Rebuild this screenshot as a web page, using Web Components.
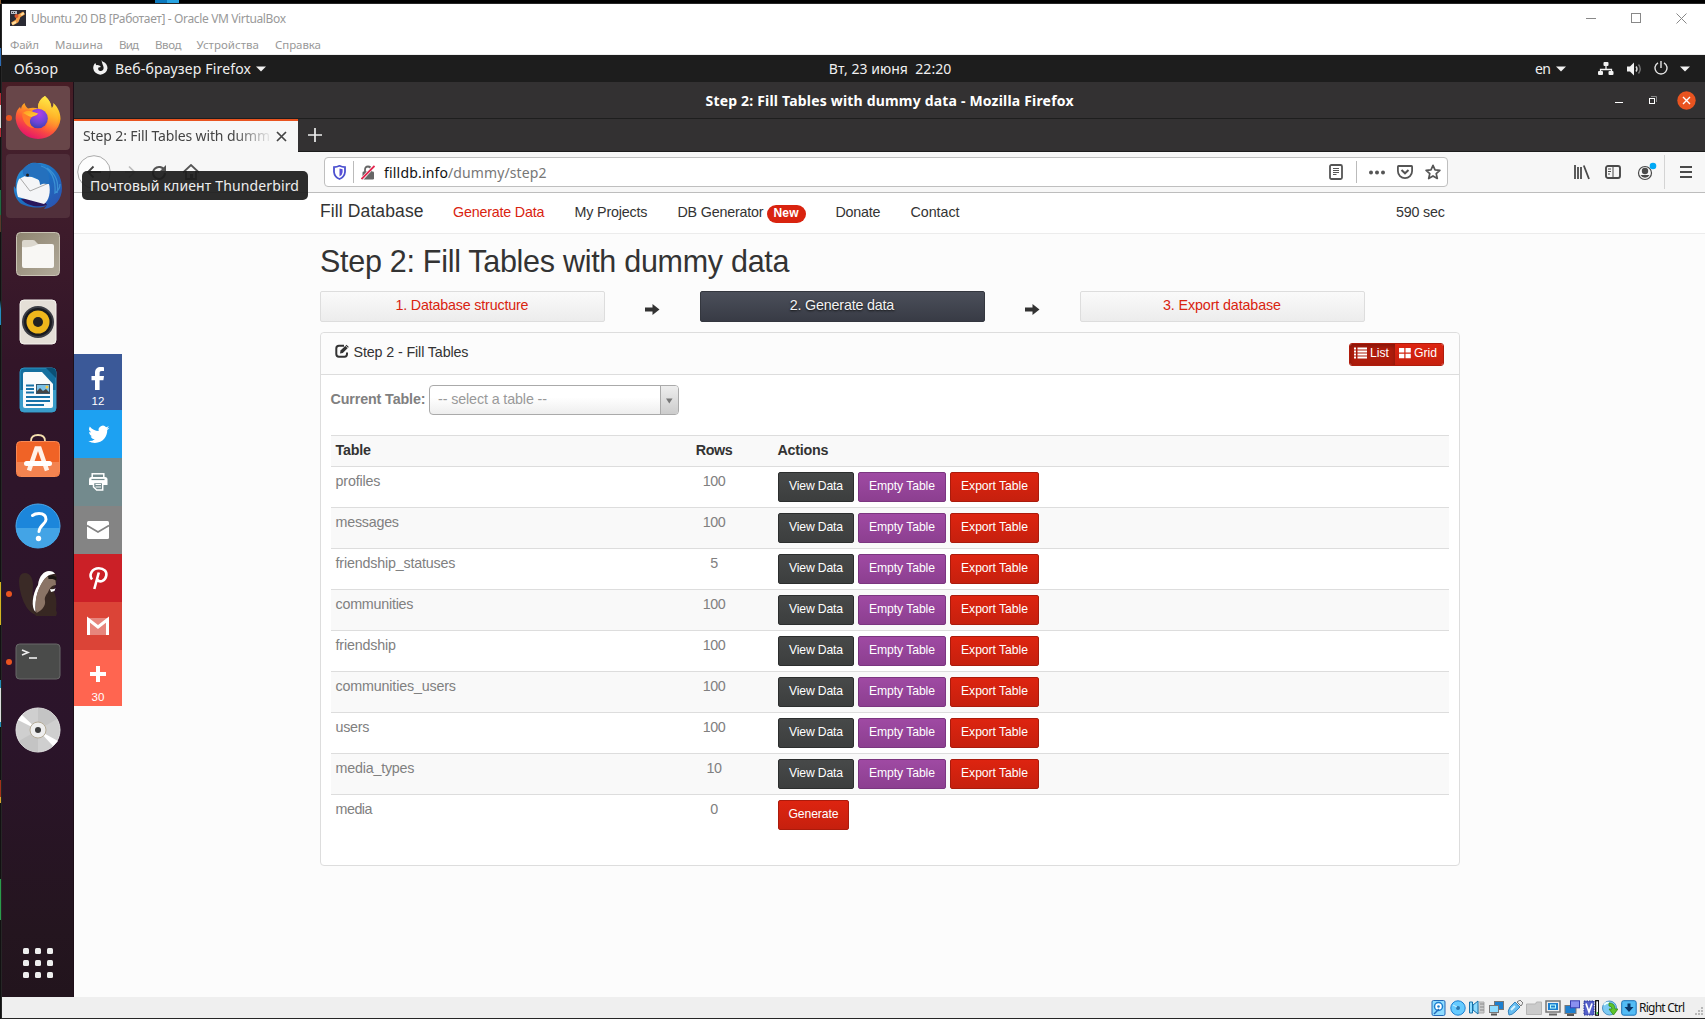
<!DOCTYPE html>
<html lang="ru">
<head>
<meta charset="utf-8">
<title>Ubuntu 20 DB</title>
<style>
html,body{margin:0;height:100%;overflow:hidden;background:#000}
</style>
</head>
<body>
<vm-window></vm-window>
<script>
const def = (name, css, html) => customElements.define(name, class extends HTMLElement {
  connectedCallback() {
    if (this.shadowRoot) return;
    const root = this.attachShadow({mode: 'open'});
    root.innerHTML = `<style>:host,*{box-sizing:border-box}svg{display:block;flex:none}${css}</style>` + (typeof html === 'function' ? html(this) : html);
  }
});

/* Single line of text tracked to an exact width */
customElements.define('fit-text', class extends HTMLElement {
  connectedCallback() {
    if (this.shadowRoot) return;
    const root = this.attachShadow({mode: 'open'});
    root.innerHTML = '<style>:host{display:inline-block;white-space:pre;flex:none}span{display:inline-block}</style><span><slot></slot></span>';
    const w = +this.getAttribute('w');
    if (!w) return;
    const s = root.querySelector('span');
    const n = s.getBoundingClientRect().width;
    s.style.letterSpacing = ((w - n) / Math.max(1, this.textContent.length - 1)).toFixed(3) + 'px';
    this.style.width = w + 'px';
  }
});

def('vm-titlebar', `
:host{display:flex;align-items:center;height:26px;background:#fff;padding:1px 0 0 8px;color:#999;font:12px/16px "Noto Sans",sans-serif}
.t{margin-left:5px;padding-top:2px}.b{margin-left:auto;display:flex;gap:35px;margin-right:18px}.b svg{margin-top:1px}`, `
<svg width="16" height="16"><rect width="16" height="16" fill="#2b2a33"/><path d="M2 14l5-3 2-5 5-3" stroke="#f5a04a" stroke-width="3.4" fill="none"/><path d="M2 14l4-2M11 5l3-2" stroke="#ffe0a0" stroke-width="2" fill="none"/><circle cx="6.5" cy="6" r="2" fill="#d8562c"/><path d="M1 1h6v3H1z" fill="#b9bcc6"/><path d="M2 2h1v1H2zM4 2h1v1H4z" fill="#333"/></svg>
<fit-text class="t" w="255">Ubuntu 20 DB [Работает] - Oracle VM VirtualBox</fit-text>
<div class="b"><svg width="10" height="10"><path d="M0 5.5h10" stroke="#888"/></svg><svg width="10" height="10"><rect x=".5" y=".5" width="9" height="9" fill="none" stroke="#888"/></svg><svg width="11" height="11"><path d="M.5.5l10 10M10.5.5l-10 10" stroke="#888"/></svg></div>`);

def('vm-menubar', `
:host{display:flex;height:25px;background:#fff;border-bottom:1px solid #eee;padding:6px 0 0 8px;color:#999;font:11.5px/17px "Noto Sans",sans-serif}
fit-text{margin-right:16px}`, `
<fit-text w="29">Файл</fit-text><fit-text w="48">Машина</fit-text><fit-text w="20">Вид</fit-text><fit-text w="26.5" style="margin-right:15px">Ввод</fit-text><fit-text w="62.5">Устройства</fit-text><fit-text w="46">Справка</fit-text>`);

const caret = '<svg width="10" height="6"><path d="M0 .5h10L5 5.5z" fill="#f2f2f2"/></svg>';
def('gnome-bar', `
:host{display:grid;grid-template-columns:1fr auto 1fr;align-items:center;height:27px;background:#1d1d1d;color:#f0f0f0;font:14px/20px "Noto Sans",sans-serif}
div{display:flex;align-items:center}.l{padding-left:12px}.r{justify-content:flex-end;padding-right:15px}`, `
<div class="l"><fit-text w="44">Обзор</fit-text>
<svg style="margin:-2px 6px 0 34px" width="17" height="16" viewBox="0 0 17 16"><path d="M10.500 1.500C13.500 2.500 15.500 5 15.500 8.300A7.200 7.200 0 0 1 1.200 8.300C1.200 6 2 4.300 3.300 3L4.300 5.200C6 4.600 8 5.600 9 7L6.500 7.500C5.500 9.500 7 11 8.700 11C10.500 11 11.800 9.600 11.600 7.500C11.400 5.500 10 4 9.500 0z" fill="#f2f2f2"/></svg>
<fit-text w="136" style="margin-right:5px">Веб-браузер Firefox</fit-text>${caret}</div>
<fit-text w="122.500" style="margin-right:-73px">Вт, 23 июня  22:20</fit-text>
<div class="r"><fit-text w="16" style="margin-right:5px">en</fit-text>${caret}
<svg style="margin-left:32px" width="16" height="14"><path d="M8 3v4M2.500 10V7.500h11V10" stroke="#f2f2f2" fill="none" stroke-width="1.3"/><rect x="5.500" y="0" width="5" height="4" rx="1" fill="#f2f2f2"/><rect x="0" y="9" width="5" height="4" rx="1" fill="#f2f2f2"/><rect x="10.500" y="9" width="5" height="4" rx="1" fill="#f2f2f2"/></svg>
<svg style="margin-left:13px" width="15" height="14"><path d="M0 4.500h3L7 .5v13L3 9.500H0z" fill="#f2f2f2"/><path d="M9 4.500q2 2.500 0 5" stroke="#ddd" fill="none" stroke-width="1.400"/><path d="M11.500 2.500q3.500 4.500 0 9" stroke="#777" fill="none" stroke-width="1.400"/></svg>
<svg style="margin:-1px 12px 0 12px" width="14" height="14"><path d="M4 1.800A6 6 0 1 0 10 1.800M7 0v7" stroke="#e5e5e5" fill="none" stroke-width="1.400"/></svg>${caret}</div>`);

def('dock-item', `
:host{display:flex;height:64px;width:64px;margin-left:4px;border-radius:4px;position:relative;align-items:center;justify-content:center}
:host([state=active]){background:#684649}:host([state=hover]){background:#51303b}
i{position:absolute;left:0;top:29px;width:6px;height:6px;border-radius:3px;background:#e95420}`,
el => (el.hasAttribute('running') ? '<i></i>' : '') + '<slot></slot>');

def('gnome-dock', `
:host{display:flex;flex-direction:column;gap:4px;width:72px;padding-top:4px;background:linear-gradient(#471d25 0,#45202c 50px,#3d1b2b 150px,#321528 280px,#2e152a 400px,#2b142a 650px,#24151f 850px,#22141d);border-right:1px solid #1e0f19}
.grid{display:grid;grid-template-columns:6px 6px 6px;gap:6px;margin:auto 0 19px 21px}.grid b{width:6px;height:6px;border-radius:1.500px;background:#eee}`, `
<dock-item state="active" running><svg width="46" height="46" viewBox="0 0 46 46"><defs><linearGradient id="f1" x1=".8" y1="0" x2=".3" y2="1"><stop offset="0" stop-color="#fff44f"/><stop offset=".35" stop-color="#ffb31f"/><stop offset=".65" stop-color="#ff5b36"/><stop offset="1" stop-color="#e3106e"/></linearGradient><radialGradient id="f2" cx=".55" cy=".25" r=".8"><stop offset="0" stop-color="#b33fe8"/><stop offset=".6" stop-color="#6b45d6"/><stop offset="1" stop-color="#3a3fa8"/></radialGradient><linearGradient id="f3" x1="0" y1="0" x2="1" y2="1"><stop offset="0" stop-color="#ff9a1f"/><stop offset="1" stop-color="#ffd23a"/></linearGradient><linearGradient id="f4" x1=".6" y1="0" x2=".4" y2="1"><stop offset="0" stop-color="#fff04a"/><stop offset=".5" stop-color="#ffb52a"/><stop offset="1" stop-color="#ff6a3a" stop-opacity="0"/></linearGradient></defs>
<path d="M30 1C33 4 36 7 36.500 13C38.500 12 38.500 9.500 38.200 8C43 12 45.500 18 45.500 24A22.500 22 0 0 1 .7 24C.7 19 1.500 15 5 12L6 14C6.500 11 7.500 9.500 9.500 8C10 10 11 12 13 13.500C16 12.500 20 12.500 23 13.500C22.500 8 26 3 30 1z" fill="url(#f1)"/>
<path d="M30 1C24 5 23 9 23 13C29 15 33 19 33 25C33 31 28 36 22 36C29 41 43 38 43 24C43 19 40 15 36.500 13C36 7 33 4 30 1z" fill="url(#f4)"/>
<circle cx="23" cy="23.500" r="9.800" fill="url(#f2)"/>
<path d="M7 18C8 14 14 13 18 17L23 18.500C22 21 18 21 17 22C14 24 14 30 19 33C13 33 7 27 7 18z" fill="#ff7b2b"/><path d="M8 18C12 14.500 16 16 18 17L23 18.500C21 21 18 20.500 16.500 22C13 21.500 11 19 8 18z" fill="url(#f3)"/></svg></dock-item>
<dock-item state="hover"><svg width="50" height="50" viewBox="0 0 50 50"><defs><linearGradient id="t1" x1="0" y1="0" x2="1" y2="1"><stop offset="0" stop-color="#2c9be0"/><stop offset=".5" stop-color="#1c6fc2"/><stop offset="1" stop-color="#2e4fae"/></linearGradient></defs>
<path d="M12 7C15 2 20 1 24 2C36 1 49 10 49 27C49 38 42 47 31 48L34 44C28 49 13 46 7 42C3 38 0 31 1 25L3 28C2 20 4 11 12 7z" fill="url(#t1)"/><path d="M8 38C14 45 25 47 34 44L28 36z" fill="#2a175c"/>
<path d="M6 18C3 24 3 30 5 36L31 43C36 40 38 30 36 23L14 14z" fill="#f4f5f7"/><path d="M7 17L17 30L36 22" fill="none" stroke="#aaa" stroke-width="1"/>
<path d="M10 8C15 2 20 2 24 2C34 5 37 12 36 23C33 23 30 22 27 24C27 17 22 15 15 16C11 16 9 13 10 8z" fill="#2470bd"/><path d="M28 5C38 8 43 18 42 32C45 30 47 27 47 23M34 7C43 13 46 22 44 32" stroke="#3b90d3" stroke-width="1.300" fill="none"/><circle cx="14.500" cy="14" r="1.500" fill="#222"/></svg></dock-item>
<dock-item><svg width="44" height="44"><defs><linearGradient id="n" x1="0" y1="0" x2="1" y2="1"><stop offset="0" stop-color="#8e8470"/><stop offset="1" stop-color="#b1aa99"/></linearGradient></defs><rect x=".5" y=".5" width="43" height="43" rx="4" fill="url(#n)" stroke="#c9c3b4"/><path d="M6 17V10q0-2 2-2h9q2 0 3 2l2 2h9v5z" fill="#dbd7cd"/><path d="M6 15q8 1 13-1.500 2-1.500 5-1.500h12q2 0 2 2v20q0 2-2 2H8q-2 0-2-2z" fill="#f8f7f4"/></svg></dock-item>
<dock-item><svg width="38" height="46"><rect x="1" y="1" width="36" height="44" rx="4" fill="#e4dfd7" stroke="#f5f3ee"/><circle cx="19" cy="23" r="16" fill="#3b3d44"/><circle cx="19" cy="23" r="14" fill="#191b20"/><circle cx="19" cy="23" r="11.500" fill="#efb71c"/><circle cx="19" cy="23" r="5" fill="#222"/></svg></dock-item>
<dock-item><svg width="38" height="46"><rect x="1" y="1" width="36" height="44" rx="4" fill="#146f9f" stroke="#2b95c4"/><path d="M1 23h36v18q0 4-4 4H5q-4 0-4-4z" fill="#3a9dca"/><path d="M4 7q0-2 2-2h17l11 12v22q0 2-2 2H6q-2 0-2-2z" fill="#f9fbfc"/><path d="M27 1h6q4 0 4 4v6z" fill="#0a4f75"/><path d="M7 18.500h8M7 22h8M7 25.500h8M7 30h24M7 34h24M7 38h18" stroke="#1672a8" stroke-width="1.800"/><rect x="17.500" y="17.500" width="13" height="9" fill="#79c0e6" stroke="#35566c"/><path d="M18 26v-2l3-3 3 3 3-2 3 3v1z" fill="#444"/><circle cx="28" cy="20" r="1.500" fill="#f9c83c"/></svg></dock-item>
<dock-item><svg style="margin-top:-5px" width="46" height="44" viewBox="-1 0 46 44"><path d="M15 9V7q0-6 7-6t7 6v2" stroke="#f4dfae" stroke-width="1.800" fill="none"/><rect x=".5" y="7.500" width="43" height="35" rx="4" fill="#f06326" stroke="#f88853"/><path d="M1 28h42v10q0 4-4 4H5q-4 0-4-4z" fill="#f38350"/><path d="M13 36.500l7.500-22h3l7.500 22" stroke="#fff1e8" stroke-width="4.500" fill="none"/><rect x="8" y="27" width="28" height="5" rx="2.500" fill="#fff"/></svg></dock-item>
<dock-item><svg width="46" height="46"><circle cx="23" cy="23" r="22" fill="#1c86db" stroke="#4ba8ea"/><path d="M1 25a22 20 0 0 0 44 0z" fill="#43a4e6"/><path d="M17.500 12.500Q20 10.500 24 10.500Q31 10.500 31 16.500C31 21 24.500 22 24 28.500" stroke="#fff" stroke-width="3" fill="none" stroke-linecap="round"/><circle cx="23.500" cy="35.500" r="2.700" fill="#fff"/></svg></dock-item>
<dock-item running><svg width="40" height="48"><path d="M7 3C12 3 15 8 15 15C14 27 15 38 21 45C10 46 2 28 1 12C1 6 3 3 7 3z" fill="#3a2a26"/><path d="M20 14C22 5 26 1 31 1C36 1 39 4 38.500 9C38.500 14 36 18 35 20C38 25 39 31 38 40L39 43L38 46H18C14 40 13 26 20 14z" fill="#372722"/><path d="M20 15C21 6 26 1 31 1C34 1 36 2 37 4C32 4 29 6 26 10C20 19 17 27 17.500 42C13 38 14 24 20 15z" fill="#fff"/><path d="M25 11C28 6 33 4 37 7L38 15C34 15.500 33 17 31 20C29 25 26 26 27 31C28 36 23 41 18.500 43C16 31 19 20 25 11z" fill="#8a7365"/><path d="M32 19q4 1 5.500-1l-1 3-3.500 1z" fill="#fff"/><path d="M30 6l4-1 4.500 2v3.500l-4-1.500-4 0z" fill="#1a1412"/></svg></dock-item>
<dock-item running><svg width="46" height="38"><rect x="1" y="1" width="44" height="35" rx="3.500" fill="#4a4b4a" stroke="#696969"/><path d="M7 7l6 2.500L7 12" stroke="#eee" stroke-width="1.600" fill="none"/><path d="M14 15h8" stroke="#eee" stroke-width="1.600"/></svg></dock-item>
<dock-item><svg width="46" height="46"><circle cx="23" cy="23" r="22" fill="#cfcfcf" stroke="#e3e3e3"/><path d="M23 23L23 1A22 22 0 0 1 42 12zM23 23L23 45A22 22 0 0 1 4 34z" fill="#c4c4c4"/><path d="M23 23L3 13 7 8zM23 23l20 11-5 5z" fill="#fff"/><circle cx="23" cy="23" r="8" fill="#eee" stroke="#b5ac98" stroke-width="1"/><circle cx="23" cy="23" r="3" fill="#3c3c3c"/></svg></dock-item>
<div class="grid">${'<b></b>'.repeat(9)}</div>`);

def('ff-titlebar', `
:host{display:grid;grid-template-columns:1fr auto 1fr;align-items:center;height:37px;background:#333132;border-bottom:1px solid #1e1e1e;color:#fff;font:bold 14px/20px "Noto Sans",sans-serif}
fit-text{padding-top:1px}div{display:flex;align-items:center;justify-content:flex-end;padding-right:9px}`, `
<span></span><fit-text w="368">Step 2: Fill Tables with dummy data - Mozilla Firefox</fit-text>
<div><svg width="8" height="8"><path d="M0 6.500h8" stroke="#fff"/></svg><svg style="margin:0 20px 0 26px" width="8" height="8"><path d="M2 .5h5.500V6" stroke="#888" fill="none"/><rect x=".5" y="2.500" width="5" height="5" fill="none" stroke="#fff"/></svg><svg width="19" height="19"><circle cx="9.500" cy="9.500" r="9.200" fill="#e95420"/><path d="M6 6l7 7M13 6l-7 7" stroke="#fff" stroke-width="1.400"/></svg></div>`);

def('ff-tabs', `
:host{display:flex;height:33px;background:#333132}
.tab{display:flex;align-items:center;width:224px;height:33px;border-top:2px solid #e95420;background:#f7f7f7;padding:0 11px 1px 9px;color:#444;font:14px/20px "Noto Sans",sans-serif}
.clip{width:187px;-webkit-mask:linear-gradient(90deg,#000 150px,transparent 190px);mask:linear-gradient(90deg,#000 150px,transparent 190px)}
.rest{flex:1;border-bottom:1px solid #1c1c1c;padding:9px 0 0 10px}`, `
<div class="tab"><div class="clip"><fit-text w="187">Step 2: Fill Tables with dumm</fit-text></div><svg style="margin-left:6px" width="11" height="11"><path d="M1 1l9 9M10 1l-9 9" stroke="#444" stroke-width="1.700"/></svg></div>
<div class="rest"><svg width="14" height="14"><path d="M7 0v14M0 7h14" stroke="#eee" stroke-width="1.700"/></svg></div>`);

def('ff-urlbar', `
:host{display:flex;align-items:center;width:1124px;height:30px;border:1px solid #bfbfbf;border-radius:4px;background:#fff;padding:0 6px 0 8px;font:14px/20px "Noto Sans",sans-serif;color:#777}
i{width:1px;height:22px;background:#bbb}b{font-weight:400;color:#111}.g{flex:1}fit-text{padding-top:1px}`, `
<svg width="13" height="15"><path d="M1 2.200Q4 2 6.500.8 9 2 12 2.200V7Q11.500 12 6.500 14 1.500 12 1 7z" fill="#fff" stroke="#4b50cf" stroke-width="1.800"/><path d="M6.500 3.500v8Q9.500 10 9.600 7V4.300z" fill="#5a4fd8"/></svg>
<i style="margin:0 7px 0 7px"></i>
<svg width="14" height="15"><path d="M4 7V5q0-3.500 3-3.500T10 5v2" fill="none" stroke="#666" stroke-width="1.800"/><rect x="1.500" y="6.500" width="11.500" height="8" rx="1.200" fill="#666"/><path d="M.5 14.500L13.500.5" stroke="#fff" stroke-width="3.200"/><path d="M.5 14L13.500 1" stroke="#e22850" stroke-width="1.800"/></svg>
<fit-text w="64" style="margin-left:9px"><b>filldb.info</b></fit-text><fit-text w="98.500">/dummy/step2</fit-text><span class="g"></span>
<svg width="14" height="16"><rect x="1" y="1" width="12" height="14" rx="1.500" fill="none" stroke="#555" stroke-width="1.800"/><path d="M4 4.500h6M4 6.500h6M4 8.500h6M4 10.500h3.500" stroke="#555"/></svg>
<i style="margin:0 12px 0 13px"></i>
<svg width="16" height="5"><circle cx="2" cy="2.500" r="2" fill="#555"/><circle cx="8" cy="2.500" r="2" fill="#555"/><circle cx="14" cy="2.500" r="2" fill="#555"/></svg>
<svg style="margin:0 12px" width="16" height="14"><path d="M1.500 1h13q.6 0 .6.700V6A7 7 0 0 1 .9 6V1.700Q.9 1 1.500 1z" fill="none" stroke="#555" stroke-width="1.800"/><path d="M4.500 5L8 8.300 11.500 5" fill="none" stroke="#555" stroke-width="2"/></svg>
<svg width="16" height="16"><path d="M8 1.300l2 4.600 4.900.4-3.700 3.300 1.100 4.900L8 11.900l-4.300 2.600 1.100-4.900L1.100 6.300 6 5.900z" fill="none" stroke="#555" stroke-width="1.700" stroke-linejoin="round"/></svg>`);

def('ff-toolbar', `
:host{display:flex;align-items:center;height:41px;padding-left:3px;background:#f7f7f7;border-bottom:1px solid #bdbdbd}
i{width:1px;height:34px;background:#d4d4d4}.g{flex:1}`, `
<svg width="34" height="34"><circle cx="17" cy="17" r="16.300" fill="#fdfdfd" stroke="#aaa"/><path d="M24 17H11M16.500 11.500L11 17l5.500 5.500" stroke="#444" stroke-width="1.800" fill="none"/></svg>
<svg style="margin-left:13px" width="14" height="14"><path d="M1 7h9M5 1.500L10.500 7 5 12.500" stroke="#bbb" stroke-width="1.700" fill="none"/></svg>
<svg style="margin-left:13px" width="16" height="16"><path d="M13.500 6.500A6 6 0 1 0 14 9" stroke="#555" stroke-width="2" fill="none"/><path d="M15 1v6H9z" fill="#555"/></svg>
<svg style="margin-left:16px" width="16" height="16"><path d="M0 8.500L8 1l8 7.500M3 7v8h10V7" stroke="#555" stroke-width="1.800" fill="none"/><path d="M7 10h3v5H7z" fill="#555"/></svg>
<ff-urlbar style="margin-left:125px"></ff-urlbar><span class="g"></span>
<svg width="16" height="16"><path d="M1 1v14M4 3v12M7 3v12M9.800 1.500L15 15" stroke="#4a4a4a" stroke-width="1.800"/></svg>
<svg style="margin:0 16px 0 15px" width="16" height="14"><rect x="1" y="1" width="14" height="12" rx="2" fill="none" stroke="#4a4a4a" stroke-width="1.900"/><path d="M8 1v12M3 4h3M3 6.500h3M3 9h2" stroke="#4a4a4a"/></svg>
<svg width="20" height="20"><circle cx="8" cy="11" r="6.500" fill="none" stroke="#4a4a4a" stroke-width="1.200"/><circle cx="8" cy="9" r="3.200" fill="#4a4a4a"/><path d="M3.500 13h9Q11 15.800 8 15.800T3.500 13z" fill="#4a4a4a"/><circle cx="16" cy="4" r="3.300" fill="#00a8f5"/></svg>
<i style="margin:0 15px 0 7px"></i>
<svg style="margin-right:13px" width="12" height="14"><path d="M0 2h12M0 7h12M0 12h12" stroke="#4a4a4a" stroke-width="1.900"/></svg>`);

def('site-nav', `
:host{display:flex;align-items:baseline;height:41px;background:#fff;border-bottom:1px solid #ececec;padding:8px 260px 0 246px;font:14.300px/20px "Liberation Sans",sans-serif;color:#333}
.brand{font-size:17.500px;margin-right:29.500px}.on{color:#d9230f}fit-text{margin-right:30px}.badge{margin:0 30px 0 -27px;align-self:flex-start;margin-top:4px;width:39px;height:18px;border-radius:9px;background:#d9230f;color:#fff;font:bold 12px/17px "Liberation Sans",sans-serif;text-align:center}
.badge fit-text{margin:0}.sec{margin:0 0 0 auto}`, `
<fit-text class="brand" w="103.500">Fill Database</fit-text><fit-text class="on" w="91.500">Generate Data</fit-text><fit-text w="73">My Projects</fit-text><fit-text w="86">DB Generator</fit-text><span class="badge"><fit-text w="25">New</fit-text></span><fit-text w="45">Donate</fit-text><fit-text w="49">Contact</fit-text><fit-text class="sec" w="49">590 sec</fit-text>`);

def('step-nav', `
:host{display:flex;align-items:center}
.s{width:285px;height:31px;border:1px solid #ddd;border-radius:2px;background:linear-gradient(#fafafa,#ececec);color:#d9230f;display:flex;justify-content:center;font:14.300px/27px "Liberation Sans",sans-serif;padding-right:1px}
.on{background:linear-gradient(#4b4f5a,#383b45);border-color:#34373f;color:#f3f3f3;text-shadow:0 1px 2px #111}
.a{width:95px;display:flex;justify-content:center;padding:5px 0 0 0}`, () => {
const a = '<div class="a"><svg width="15" height="11"><path d="M0 3.500h7.500V0L14.500 5.500 7.500 11V7.500H0z" fill="#333"/></svg></div>';
return `<div class="s"><fit-text w="133">1. Database structure</fit-text></div>${a}<div class="s on"><fit-text w="104.500">2. Generate data</fit-text></div>${a}<div class="s"><fit-text w="118">3. Export database</fit-text></div>`;});

def('act-button', `
:host{display:inline-flex;justify-content:center;height:30px;border-radius:2px;border:1px solid;color:#fff;font:12.200px/26px "Liberation Sans",sans-serif}
:host([kind=dark]){width:76px;background:linear-gradient(#474949,#3c3e3e);border-color:#2c2e2e}
:host([kind=purple]){width:88px;background:linear-gradient(#9f4aa3,#8c3f90);border-color:#7b3680}
:host([kind=red]){width:89px;background:linear-gradient(#dd2410,#c6200e);border-color:#ab1b0c}
:host([short]){width:71px}`, '<slot></slot>');

def('table-row', `
:host{display:grid;grid-template-columns:356.500px 44px 1fr;height:41px;border-top:1px solid #ddd;padding:5px 0 0 4.500px;color:#808080;font:14.300px/20px "Liberation Sans",sans-serif}
:host([odd]){background:#f9f9f9}
.n{text-align:center}.n,.d{margin-top:-1px}.b{display:flex;gap:4px;padding-left:42px}`, el => {
const [name, w, rows] = ['name','w','rows'].map(k => el.getAttribute(k));
const acts = rows === '0' ? '<act-button kind="red" short><fit-text w="50">Generate</fit-text></act-button>' :
 '<act-button kind="dark"><fit-text w="54">View Data</fit-text></act-button><act-button kind="purple"><fit-text w="66">Empty Table</fit-text></act-button><act-button kind="red"><fit-text w="67">Export Table</fit-text></act-button>';
return `<div class="d"><fit-text w="${w}">${name}</fit-text></div><div class="n"><fit-text w="${rows.length*7.7}">${rows}</fit-text></div><div class="b">${acts}</div>`;});

def('table-panel', `
:host{display:flex;flex-direction:column;width:1140px;height:534px;border:1px solid #ddd;border-radius:4px;background:#fff;font:14.300px/20px "Liberation Sans",sans-serif;color:#333}
.h{display:flex;height:42px;background:#fcfcfc;border-bottom:1px solid #ddd;border-radius:4px 4px 0 0;padding:10px 15px 0 14px}
.h>fit-text{margin-top:-1px}
.tg{margin-left:auto;display:flex;width:95px;height:23px;border:1px solid #b01c0c;border-radius:3px;overflow:hidden;color:#fff;font-size:12.200px;line-height:19px}
.tg span{display:flex;gap:3px;padding-left:4px;background:linear-gradient(#dd2410,#c6200e)}.tg .on{width:45px;background:#ae1c0c;box-shadow:inset 0 2px 4px rgba(0,0,0,.25)}.tg .off{flex:1}.tg svg{margin-top:3px}
.f{display:flex;height:60px;padding:10px 0 0 9.500px;color:#808080;font-weight:bold}
.f>fit-text{margin-top:4px}.sel{display:flex;margin-left:3.500px;width:250px;height:30px;border:1px solid #aaa;border-radius:4px;background:linear-gradient(#fff 40%,#eee);font-weight:400;color:#999;padding:3px 0 0 8px}
.ar{margin:-3px 0 0 auto;width:18px;border-left:1px solid #aaa;background:linear-gradient(#eee,#ccc);border-radius:0 3px 3px 0;padding:12px 0 0 5px}
.th{display:grid;grid-template-columns:356.500px 44px 1fr;height:31px;border-top:1px solid #ddd;background:#f9f9f9;padding:4px 0 0 4.500px;font-weight:bold}
.tb{margin:0 10px}.th div+div{text-align:center}.th div:last-child{text-align:left;padding-left:41.500px}`, () => {
const data = [['profiles',45,100],['messages',63.5,100],['friendship_statuses',120,5],['communities',78,100],['friendship',60.5,100],['communities_users',120.5,100],['users',34,100],['media_types',79,10],['media',37,0]];
return `
<div class="h"><svg style="margin:1px 3.500px 0 0" width="15" height="14"><path d="M9 1.800H4Q1.300 1.800 1.300 4.500v5.500Q1.300 12.700 4 12.700h5.500Q12 12.700 12 10V8.500" stroke="#333" stroke-width="2" fill="none"/><path d="M5 9.500l.5-3L11.500.8l2.300 2.200L7.800 9z" fill="#333"/><path d="M10.300 1.500l3 3" stroke="#fff" stroke-width=".8"/></svg><fit-text w="115">Step 2 - Fill Tables</fit-text>
<div class="tg"><span class="on"><svg width="13" height="12"><path d="M0 1.500h2M0 4.500h2M0 7.500h2M0 10.500h2M3.500 1.500H13M3.500 4.500H13M3.500 7.500H13M3.500 10.500H13" stroke="#fff" stroke-width="1.900"/></svg><fit-text w="19">List</fit-text></span><span class="off"><svg width="12" height="12"><path d="M0 1h5.300v4.500H0zM6.500 1h5.300v4.500H6.500zM0 6.700h5.300v4.500H0zM6.500 6.700h5.300v4.500H6.500z" fill="#fff"/></svg><fit-text w="23">Grid</fit-text></span></div></div>
<div class="f"><fit-text w="95">Current Table:</fit-text><div class="sel"><fit-text w="109">-- select a table --</fit-text><div class="ar"><svg width="7" height="6"><path d="M0 .5h6.500L3.300 5.500z" fill="#777"/></svg></div></div></div>
<div class="tb"><div class="th"><div><fit-text w="35.500">Table</fit-text></div><div><fit-text w="37" style="margin:0 -4px">Rows</fit-text></div><div><fit-text w="51">Actions</fit-text></div></div>
${data.map((d,i)=>`<table-row ${i%2?'odd':''} name="${d[0]}" w="${d[1]}" rows="${d[2]}"></table-row>`).join('')}</div>`;});

def('share-bar', `
:host{display:block;width:48px;color:#fff;font:11.500px/14px "Liberation Sans",sans-serif}
div{height:48px;display:flex;flex-direction:column;align-items:center;justify-content:center}.t{height:56px;justify-content:flex-start;padding-top:8px}`, `
<div class="t" style="background:#3b5998"><svg width="32" height="32" viewBox="0 0 32 32"><path d="M22 5.200V9h-2.300c-1.800 0-2.100.9-2.100 2.100V14H22l-.6 4.300h-3.800V28H13v-9.700H9.500V14H13v-3.300C13 7 15.300 5 18.700 5c1.500 0 2.900.1 3.300.2z" fill="#fff"/></svg><span>12</span></div>
<div style="background:#1da1f2"><svg width="32" height="32" viewBox="0 0 32 32"><path transform="translate(2.800 2.200) scale(.88)" d="M28 8.600a9.900 9.900 0 0 1-2.800.8 4.900 4.900 0 0 0 2.100-2.700 9.900 9.900 0 0 1-3.100 1.200 4.900 4.900 0 0 0-8.400 4.500A14 14 0 0 1 5.700 7.200a4.900 4.900 0 0 0 1.500 6.600 4.900 4.900 0 0 1-2.200-.6v.1a4.900 4.900 0 0 0 3.900 4.800 4.900 4.900 0 0 1-2.200.1 4.900 4.900 0 0 0 4.600 3.400A9.900 9.900 0 0 1 4 23.600a14 14 0 0 0 7.500 2.200c9.100 0 14.300-7.700 14-14.600A10 10 0 0 0 28 8.600z" fill="#fff"/></svg></div>
<div style="background:#738a8d"><svg width="32" height="32" viewBox="0 0 32 32"><rect x="10.200" y="7.800" width="11.600" height="4" fill="#738a8d" stroke="#fff" stroke-width="1.500"/><path d="M9 11h14q2.500 0 2.500 2.500V19H7V13.500Q7 11 9 11z" fill="#fff"/><path d="M9.500 13.500h13" stroke="#738a8d" stroke-width="1.200"/><path d="M11.500 16.500h9.200V24h-6l-3.200-3z" fill="#738a8d" stroke="#fff" stroke-width="1.500"/><path d="M13.500 18.500h5.500M13.500 21h5.500" stroke="#fff" stroke-width="1.200"/></svg></div>
<div style="background:#848484"><svg width="32" height="32" viewBox="0 0 32 32"><rect x="5" y="7" width="22" height="18" rx="1.500" fill="#fff"/><path d="M5 11.500l11 6.500 11-6.500" fill="none" stroke="#848484" stroke-width="1.700"/></svg></div>
<div style="background:#cb2027"><svg width="32" height="32" viewBox="0 0 32 32"><path d="M10 17.500C6.500 13 10 6.200 16.800 6.200C22 6.200 25 9.500 24.300 13.500C23.500 18.500 18 21.500 15.200 17.500M16.800 10.500L12.300 27" stroke="#fff" stroke-width="2.600" fill="none"/></svg></div>
<div style="background:#db4437"><svg width="32" height="32" viewBox="0 0 32 32"><path d="M5 8h22v17H5z" fill="#fff" opacity=".35"/><path d="M6.500 25V9.500L16 17l9.500-7.500V25" stroke="#fff" stroke-width="3" fill="none"/></svg></div>
<div class="t" style="background:#ff6550"><svg width="32" height="32"><path d="M16 8v16M8 16h16" stroke="#fff" stroke-width="4"/></svg><span>30</span></div>`);

def('fill-page', `
:host{display:block;position:relative;flex:1;background:#fcfcfc}
.c{padding-left:246px}.ti{font:30.500px/40px "Liberation Sans",sans-serif;color:#333;height:57px;padding-top:7px}
table-panel{margin-top:10px}share-bar{position:absolute;left:0;top:161px}`, `
<site-nav></site-nav><div class="c"><div class="ti"><fit-text w="469.500">Step 2: Fill Tables with dummy data</fit-text></div><step-nav></step-nav><table-panel></table-panel></div><share-bar></share-bar>`);

def('vm-status', `
:host{display:flex;align-items:center;justify-content:flex-end;height:21px;background:#efefef;gap:3px;font:12px/16px "Noto Sans",sans-serif;color:#111}
fit-text{margin:0 11px 0 0}`, () => {
const B='#1c7fd0', L='#8fdcff', s=x=>`<svg width="16" height="16">${x}</svg>`;
return s(`<rect x="1" y=".5" width="13" height="15" rx="1.500" fill="${L}" stroke="#2369b8"/><circle cx="7.500" cy="6.500" r="4" fill="#fff" stroke="${B}" stroke-width="1.500"/><circle cx="7.500" cy="6.500" r="1.300" fill="${B}"/><path d="M3 14l5-5" stroke="#2369b8" stroke-width="1.500"/>`)
+s(`<circle cx="8" cy="8" r="7.200" fill="#66cbff" stroke="${B}"/><circle cx="8" cy="8" r="2" fill="#2b77ae"/><path d="M3 5l4 2" stroke="#caf0ff"/>`)
+s(`<path d="M10 2h5v11H8" fill="#ccc" stroke="#aaa"/><path d="M11 4h4M11 7h4M11 10h4" stroke="#888"/><path d="M.5 2h3v11h-3zM4 5l5-4v13l-5-4z" fill="${L}" stroke="#1670a8"/>`)
+s(`<rect x="6.500" y="1.500" width="9" height="8" fill="${B}" stroke="#777"/><rect x="1.500" y="5.500" width="9" height="7" fill="${L}" stroke="#777"/><path d="M3 14.500h6" stroke="#555" stroke-width="2"/>`)
+s(`<path d="M2 15Q0 11 3 7L8 2l5 5-5 5q-3 3-6 3z" fill="#67bdf0" stroke="#3684bd"/><path d="M10 2l3-2 3 3-2 3z" fill="#eee" stroke="#777"/><path d="M4 10l4-4" stroke="#d8f4ff" stroke-width="2"/>`)
+s(`<path d="M.5 14.500V4h9l1-2h5v12.500z" fill="#cbcbcb" stroke="#b5b5b5"/>`)
+s(`<rect x="1" y="1" width="14" height="11" fill="#eee" stroke="#777" stroke-width="1.500"/><rect x="3" y="3" width="10" height="7" fill="${B}"/><rect x="5.500" y="5" width="5" height="3" fill="none" stroke="#bff"/><path d="M4 14.500h8" stroke="#666" stroke-width="2"/>`)
+s(`<rect x="1" y="5.500" width="11" height="8" fill="${B}" stroke="#777"/><rect x="6.500" y=".8" width="9" height="7" fill="#8a8ff0" stroke="#393db0"/><path d="M3 15h7" stroke="#555" stroke-width="2"/>`)
+s(`<rect x="1" y="1" width="10" height="14" fill="#5560c8" stroke="#223095" stroke-dasharray="1.500 1"/><path d="M3 3.500L6 12 9 3.500" stroke="#fff" stroke-width="1.700" fill="none"/><rect x="12.700" y=".7" width="3" height="14.500" fill="#fff" stroke="#000" stroke-width="1.200"/><path d="M13.500 13h1.500" stroke="#3c3" stroke-width="2"/>`)
+s(`<circle cx="7.500" cy="8" r="7" fill="#7ccaf2" stroke="#4a90c5"/><path d="M2 5Q4 2 7 3" stroke="#eaffff" stroke-width="2" fill="none"/><path d="M7 3q6 0 6 6h3l-4.500 6L7 9h3q0-3-3-3z" fill="#5cc52c" stroke="#358a12" stroke-width=".8"/>`)
+s(`<rect x=".7" y=".7" width="14.500" height="14.500" rx="2" fill="#53bcf5" stroke="#1a70b5"/><path d="M6.500 3.500h3V7h3L8 12 3.500 7h3z" fill="#0b3768"/>`)
+`<fit-text w="46" style="margin-left:-1px">Right Ctrl</fit-text><svg style="margin:8px 1px 0 -4px" width="9" height="9"><path d="M6 0h2v2H6zM3 3h2v2H3zM6 3h2v2H6zM0 6h2v2H0zM3 6h2v2H3zM6 6h2v2H6z" fill="#b8b8b8"/></svg>`;});

def('tool-tip', `
:host{display:flex;align-items:center;width:226px;height:29px;border-radius:5px;background:rgba(28,28,28,.93);color:#eee;font:14px/20px "Noto Sans",sans-serif;padding:0 0 0 8px}`, '<slot></slot>');

def('vm-window', `
:host{display:flex;flex-direction:column;position:relative;width:1705px;height:1019px;overflow:hidden;background:linear-gradient(90deg,#000 0 155px,#0b78bd 155px 167px,#27a3e2 167px 179px,#000 179px) 0 0/100% 3px no-repeat,#262626;padding:4px 0 1px 2px}
.edge{position:absolute;left:0;top:0;width:1px;height:1019px;background:linear-gradient(#8a5a30 0 4px,#111 4px 48px,#2d6cb5 48px 66px,#111 66px 93px,#b22c35 93px 105px,#ddd 105px 128px,#b22c35 128px 137px,#111 137px 190px,#1f6a40 190px 215px,#59392a 215px 232px,#111 232px 300px,#248bc2 309px 325px,#111 325px 582px,#d7b321 582px 625px,#111 625px 680px,#218cb8 680px 688px,#ddd 688px 722px,#218cb8 722px 727px,#111 727px 780px,#a33119 780px 797px,#d9a52e 797px 803px,#111 803px 879px,#2a9c4b 879px 920px,#111 920px)}
.m{display:flex;flex:1;min-height:0}.ff{display:flex;flex-direction:column;flex:1}
tool-tip{position:absolute;left:82px;top:171px}`, `
<div class="edge"></div><vm-titlebar></vm-titlebar><vm-menubar></vm-menubar><gnome-bar></gnome-bar>
<div class="m"><gnome-dock></gnome-dock><div class="ff"><ff-titlebar></ff-titlebar><ff-tabs></ff-tabs><ff-toolbar></ff-toolbar><fill-page></fill-page></div></div>
<vm-status></vm-status><tool-tip><fit-text w="209">Почтовый клиент Thunderbird</fit-text></tool-tip>`);
</script>
</body>
</html>
